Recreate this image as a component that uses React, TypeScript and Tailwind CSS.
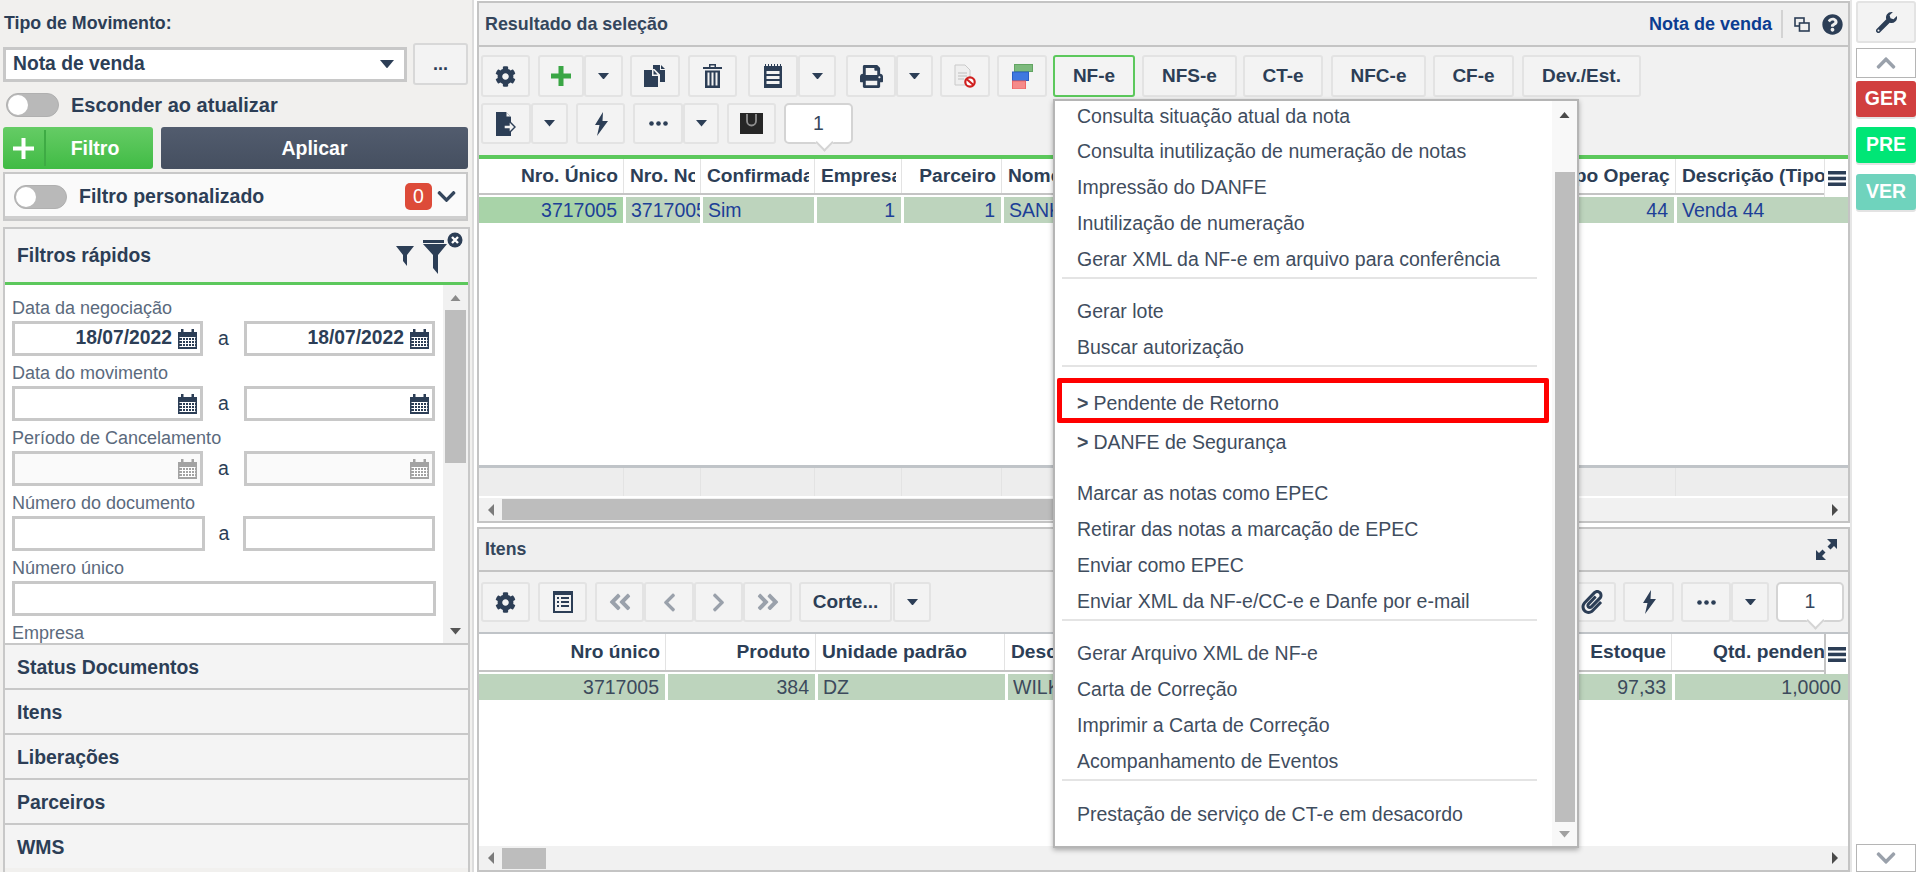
import React from 'react';
import { FaCog, FaPrint, FaPaperclip, FaQuestionCircle, FaChevronDown, FaChevronUp, FaChevronLeft, FaChevronRight, FaAngleDoubleLeft, FaAngleDoubleRight } from 'react-icons/fa';

const NAVY = '#2c3e56';

function Caret({ size = 11, color = NAVY }: { size?: number; color?: string }) {
    return (
        <svg width={size} height={size * 0.6} viewBox="0 0 10 6"><path d="M0 0h10L5 6z" fill={color} /></svg>
    );
}

function Calendar({ muted }: { muted?: boolean }) {
    const c = muted ? '#a3a3a3' : NAVY;
    return (
        <svg width="19" height="20" viewBox="0 0 19 20" className="shrink-0">
            <rect x="0" y="3" width="19" height="17" fill={c} />
            <rect x="3" y="0" width="2.5" height="4" fill={c} />
            <rect x="13.5" y="0" width="2.5" height="4" fill={c} />
            {[8, 11, 14, 17].map((y) => (
                <rect key={y} x="1.5" y={y} width="16" height="1" fill="#fff" />
            ))}
            {[4, 7, 10, 13, 16].map((x) => (
                <rect key={x} x={x} y="8" width="1" height="10" fill="#fff" />
            ))}
        </svg>
    );
}

function PlusIcon() {
    return (
        <svg width="20" height="20" viewBox="0 0 20 20"><path d="M7.5 0h5v7.5H20v5h-7.5V20h-5v-7.5H0v-5h7.5z" fill="#3aa645" /></svg>
    );
}

function CopyIcon() {
    return (
        <svg width="22" height="22" viewBox="0 0 22 22" fill={NAVY}>
            <path d="M9 0h7v5h5v12h-5V9.500L10.500 4H9z" />
            <path d="M17 0l4 4h-4z" />
            <path d="M0 5h8v6h6v11H0z" />
            <path d="M9.500 5l4 4.500h-4z" />
        </svg>
    );
}

function TrashIcon() {
    return (
        <svg width="19" height="24" viewBox="0 0 19 24" fill={NAVY}>
            <path d="M6 0h7v3h6v2H0V3h6zM7.500 1.500V3h4V1.500z" />
            <path d="M2 6.500h15V24H2zM4.500 8.500v13h2v-13zm4 0v13h2v-13zm4 0v13h2v-13z" fillRule="evenodd" />
        </svg>
    );
}

function NotepadIcon() {
    return (
        <svg width="18" height="24" viewBox="0 0 18 24" fill={NAVY}>
            <path d="M0 2h18v22H0zM2.500 7v3h13V7zm0 5v3h13v-3zm0 5v3h13v-3z" fillRule="evenodd" />
            <path d="M1 0h1v2H1zM4 0h1v2H4zM7 0h1v2H7zM10 0h1v2h-1zM13 0h1v2h-1zM16 0h1v2h-1z" />
        </svg>
    );
}

function DocBlockIcon() {
    return (
        <svg width="22" height="24" viewBox="0 0 22 24">
            <path d="M1 1h10l5 5v15H1z" fill="#efefef" stroke="#c9c9c9" />
            <path d="M4 9h9M4 12h9M4 15h6" stroke="#bdbdbd" />
            <circle cx="16" cy="18" r="4.700" fill="#fff" stroke="#d0201f" strokeWidth="2.200" />
            <path d="M12.500 15l7 6" stroke="#d0201f" strokeWidth="2.200" />
        </svg>
    );
}

function StackIcon() {
    return (
        <svg width="22" height="25" viewBox="0 0 22 25">
            <rect x="3.500" y="0.500" width="18" height="7" fill="#7dba7d" stroke="#62a562" />
            <rect x="1.500" y="8" width="16" height="8.500" fill="#3f78e0" stroke="#2a5fc4" />
            <rect x="1.500" y="17" width="13" height="8" fill="#f58a8a" stroke="#e66" />
        </svg>
    );
}

function ExportIcon() {
    return (
        <svg width="20" height="24" viewBox="0 0 20 24">
            <path d="M0 0h10l5 5v19H0z" fill={NAVY} />
            <path d="M10.500 0.500l4 4h-4z" fill="#f3f3f3" />
            <path d="M8 13h5V9l6 6-6 6v-4H8z" fill="#f3f3f3" stroke={NAVY} strokeWidth="1.400" />
        </svg>
    );
}

function BoltIcon() {
    return (
        <svg width="14" height="24" viewBox="0 0 14 24"><path d="M9 0L1 13h4.500L3 24 14 9H8.500z" fill={NAVY} /></svg>
    );
}

function Dots() {
    return (
        <svg width="19" height="5" viewBox="0 0 19 5" fill={NAVY}>
            <circle cx="2.500" cy="2.500" r="2.300" /><circle cx="9.500" cy="2.500" r="2.300" /><circle cx="16.500" cy="2.500" r="2.300" />
        </svg>
    );
}

function BagIcon() {
    return (
        <svg width="23" height="21" viewBox="0 0 23 21">
            <rect width="23" height="21" fill="#262626" />
            <path d="M7 1v7a4.500 4.500 0 0 0 9 0V1" fill="none" stroke="#8f8f8f" strokeWidth="1.800" />
        </svg>
    );
}

function GridListIcon() {
    return (
        <svg width="20" height="22" viewBox="0 0 20 22" fill={NAVY}>
            <path d="M0 0h20v22H0zM2 4v16h16V4z" fillRule="evenodd" />
            <path d="M4 6h2v2H4zM8 6h8v2H8zM4 10h2v2H4zM8 10h8v2H8zM4 14h2v2H4zM8 14h8v2H8z" />
        </svg>
    );
}

function FunnelPlain() {
    return (
        <svg width="18" height="20" viewBox="0 0 18 20"><path d="M0 0h18l-7 9v11l-4-5V9z" fill={NAVY} /></svg>
    );
}

function FunnelClear() {
    return (
        <svg width="40" height="42" viewBox="0 0 40 42">
            <rect x="0" y="8" width="21" height="3" fill={NAVY} />
            <path d="M0 12h24l-9 11v19l-5-6V23z" fill={NAVY} />
            <circle cx="32" cy="8" r="7.500" fill={NAVY} />
            <path d="M29 5l6 6M35 5l-6 6" stroke="#fff" strokeWidth="2.400" />
        </svg>
    );
}

function ExpandIcon() {
    return (
        <svg width="21" height="21" viewBox="0 0 21 21" fill={NAVY}>
            <path d="M11 0h10v10l-3-3-3.500 3.500-3-3L15 4z" />
            <path d="M0 21V11l3 3 3.500-3.500 3 3L6 17l4 4z" />
        </svg>
    );
}

function CloneIcon() {
    return (
        <svg width="16" height="15" viewBox="0 0 16 15" fill="none" stroke={NAVY} strokeWidth="1.600">
            <rect x="1" y="1" width="9" height="8" />
            <rect x="5.500" y="6" width="9.500" height="8" fill="#efefef" />
        </svg>
    );
}

function WrenchIcon() {
    return (
        <svg width="21" height="21" viewBox="0 0 21 21">
            <path d="M15.500 0a5.500 5.500 0 0 0-5.200 7.300L0.700 16.900a2.400 2.400 0 0 0 3.400 3.400l9.600-9.600A5.500 5.500 0 0 0 20.800 4l-3.300 3.200-3-1 -0.900-3L16.900 0.100A5.500 5.500 0 0 0 15.500 0z" fill={NAVY} />
            <circle cx="2.500" cy="18.500" r="1" fill="#f3f3f3" />
        </svg>
    );
}

function Hamburger() {
    return (
        <svg width="18" height="15" viewBox="0 0 18 15" fill={NAVY}>
            <rect width="18" height="3.500" /><rect y="5.700" width="18" height="3.500" /><rect y="11.500" width="18" height="3.500" />
        </svg>
    );
}

function Toggle() {
    return (
        <div className="w-[53px] h-[24px] rounded-full bg-[#b9b9b9] border border-[#b0b0b0] flex items-center pl-[1px]">
            <div className="w-[20px] h-[20px] rounded-full bg-white" />
        </div>
    );
}

function Btn({ w, className = '', children }: { w: string; className?: string; children?: React.ReactNode }) {
    return (
        <div className={`${w} h-full shrink-0 flex items-center justify-center rounded-[3px] border-2 border-[#e3e3e3] bg-[#f3f3f3] text-[19px] font-bold text-[#2c3e56] ${className}`}>
            {children}
        </div>
    );
}

function CountBubble({ className = '' }: { className?: string }) {
    return (
        <div className={`relative h-full shrink-0 flex items-center justify-center rounded-[5px] border-2 border-[#d4d4d4] bg-white text-[19.500px] text-[#34465c] ${className}`}>
            1
            <div className="absolute -bottom-[7px] right-[20px] w-[13px] h-[13px] rotate-45 bg-white border-r-2 border-b-2 border-[#d4d4d4]" />
        </div>
    );
}

function HScroll({ thumb, className = '' }: { thumb: string; className?: string }) {
    return (
        <div className={`flex items-center bg-[#f1f1f1] ${className}`}>
            <div className="w-[23px] flex justify-center shrink-0">
                <svg width="6" height="12" viewBox="0 0 6 12"><path d="M6 0v12L0 6z" fill="#7b7b7b" /></svg>
            </div>
            <div className={`${thumb} h-[21px] bg-[#bdbdbd]`} />
            <div className="flex-1 flex justify-end pr-[10px]">
                <svg width="6" height="12" viewBox="0 0 6 12"><path d="M0 0v12l6-6z" fill="#4a4a4a" /></svg>
            </div>
        </div>
    );
}

function HeadCell({ w, right, children }: { w: string; right?: boolean; children?: React.ReactNode }) {
    return (
        <div className={`${w} h-full shrink-0 flex items-center pl-[6px] pr-[5px] border-r border-[#e3e3e3]`}>
            <div className={`w-full overflow-hidden whitespace-nowrap font-bold text-[19.200px] text-[#2c3e56] ${right ? 'text-right' : ''}`}>{children}</div>
        </div>
    );
}

function RowCell({ w, right, bg = 'bg-[#bdd4bd]', text = 'text-[#1d3f97]', pr = 'pr-[6px]', children }: { w: string; right?: boolean; bg?: string; text?: string; pr?: string; children?: React.ReactNode }) {
    return (
        <div className={`${w} h-full shrink-0 flex items-center pl-[5px] ${pr} pt-[2px] ${bg}`}>
            <div className={`w-full overflow-hidden whitespace-nowrap text-[19.500px] ${text} ${right ? 'text-right' : ''}`}>{children}</div>
        </div>
    );
}

function Field({ label, children }: { label: string; children: React.ReactNode }) {
    return (
        <div>
            <div className="h-[30px] flex items-center pt-[4px] text-[18px] text-[#5b6a7d] whitespace-nowrap">{label}</div>
            <div className="h-[35px] flex items-center">{children}</div>
        </div>
    );
}

function DateInput({ value, muted }: { value?: string; muted?: boolean }) {
    return (
        <div className={`w-[191px] h-full flex items-center justify-end gap-[6px] pr-[3px] border-[3px] border-[#c8c8c8] ${muted ? 'bg-[#fafafa]' : 'bg-white'}`}>
            {value && <span className="font-bold text-[19.300px] text-[#2c3e56]">{value}</span>}
            <Calendar muted={muted} />
        </div>
    );
}

function MenuItem({ children, className = '' }: { children: React.ReactNode; className?: string }) {
    return <div className={`h-[36px] flex items-center pl-[22px] pt-[2px] whitespace-nowrap ${className}`}>{children}</div>;
}

function MenuSep({ className = '' }: { className?: string }) {
    return <div className={`ml-[7px] w-[475px] border-t-2 border-[#e4e4e4] ${className}`} />;
}

export default function App() {
    return (
        <div className="relative flex w-[1918px] h-[872px] overflow-hidden bg-white font-['Liberation_Sans',Arial,sans-serif] text-[#2c3e56]">

            {/* Left filter panel */}
            <aside className="w-[474px] h-full shrink-0 flex flex-col bg-[#f1f0ee] border-r-2 border-[#dcdcdc]">
                <div className="h-[43px] shrink-0 flex items-center pl-[4px] pt-[3px] font-bold text-[17.800px]">Tipo de Movimento:</div>

                <div className="h-[42px] shrink-0 flex items-center pl-[3px]">
                    <div className="w-[404px] h-[35px] flex items-center justify-between pl-[7px] pr-[10px] bg-white border-[3px] border-[#c8c8c8] font-bold text-[19.300px]">
                        Nota de venda
                        <Caret size={14} />
                    </div>
                    <div className="ml-[6px] w-[55px] h-[42px] flex items-end justify-center pb-[10px] rounded-[3px] border-2 border-[#d8d8d8] bg-[#f3f3f3] font-bold text-[18px] leading-none">...</div>
                </div>

                <div className="mt-[8px] h-[24px] shrink-0 flex items-center pl-[6px] gap-[12px]">
                    <Toggle />
                    <span className="font-bold text-[20px]">Esconder ao atualizar</span>
                </div>

                <div className="mt-[10px] h-[42px] shrink-0 flex pl-[3px] gap-[8px]">
                    <div className="w-[150px] flex items-center rounded-[3px] bg-gradient-to-b from-[#65cc65] to-[#3fbb44] text-white font-bold text-[19.500px]">
                        <div className="w-[43px] h-[36px] flex items-center justify-center border-r-2 border-[#3eab44]">
                            <svg width="21" height="21" viewBox="0 0 21 21"><path d="M8.500 0h4v8.500H21v4h-8.500V21h-4v-8.500H0v-4h8.500z" fill="#fff" /></svg>
                        </div>
                        <span className="flex-1 text-center pr-[9px] pt-[1px]">Filtro</span>
                    </div>
                    <div className="w-[307px] flex items-center justify-center pt-[1px] rounded-[3px] bg-gradient-to-b from-[#525c6e] to-[#454f60] text-white font-bold text-[19.500px]">Aplicar</div>
                </div>

                <div className="mt-[3px] ml-[3px] w-[465px] h-[49px] shrink-0 flex items-center pl-[9px] pr-[9px] bg-[#fafafa] border-2 border-[#c8c8c8] shadow-[inset_0_-3px_0_#cfcfcf]">
                    <Toggle />
                    <span className="ml-[12px] font-bold text-[19.500px]">Filtro personalizado</span>
                    <span className="ml-auto w-[27px] h-[27px] flex items-center justify-center rounded-[5px] bg-[#dd4b39] text-white text-[19.500px]">0</span>
                    <FaChevronDown className="ml-[4px] text-[#34465c]" size={21} />
                </div>

                <div className="mt-[6px] ml-[3px] w-[467px] flex-1 min-h-0 flex flex-col border-x-2 border-t-2 border-[#c8c8c8]">
                    <div className="h-[53px] shrink-0 flex items-center justify-between pl-[12px] pt-[2px] bg-[#f4f4f4] pr-[5px]">
                        <span className="font-bold text-[19.300px]">Filtros rápidos</span>
                        <div className="flex items-center -mt-[2px]">
                            <FunnelPlain />
                            <div className="ml-[9px] -mt-[6px]"><FunnelClear /></div>
                        </div>
                    </div>
                    <div className="h-[3px] shrink-0 bg-[#5cc85c]" />

                    <div className="h-[358px] shrink-0 flex bg-white overflow-hidden">
                        <div className="flex-1 pl-[7px] pt-[6px] overflow-hidden">
                            <Field label="Data da negociação">
                                <DateInput value="18/07/2022" />
                                <span className="w-[41px] text-center text-[19.500px]">a</span>
                                <DateInput value="18/07/2022" />
                            </Field>
                            <Field label="Data do movimento">
                                <DateInput />
                                <span className="w-[41px] text-center text-[19.500px]">a</span>
                                <DateInput />
                            </Field>
                            <Field label="Período de Cancelamento">
                                <DateInput muted />
                                <span className="w-[41px] text-center text-[19.500px]">a</span>
                                <DateInput muted />
                            </Field>
                            <Field label="Número do documento">
                                <div className="w-[193px] h-full bg-white border-[3px] border-[#c8c8c8]" />
                                <span className="w-[38px] text-center text-[19.500px]">a</span>
                                <div className="w-[192px] h-full bg-white border-[3px] border-[#c8c8c8]" />
                            </Field>
                            <Field label="Número único">
                                <div className="w-[424px] h-full bg-white border-[3px] border-[#c8c8c8]" />
                            </Field>
                            <div className="h-[30px] flex items-center pt-[4px] text-[18px] text-[#5b6a7d]">Empresa</div>
                        </div>
                        <div className="w-[25px] shrink-0 bg-[#f1f1f1] flex flex-col items-center">
                            <div className="h-[25px] flex items-center justify-center"><svg width="11" height="6" viewBox="0 0 10 6"><path d="M0 6h10L5 0z" fill="#8a8a8a" /></svg></div>
                            <div className="w-[21px] h-[153px] bg-[#bdbdbd]" />
                            <div className="flex-1 flex items-end pb-[8px]"><Caret color="#555" /></div>
                        </div>
                    </div>

                    {['Status Documentos', 'Itens', 'Liberações', 'Parceiros', 'WMS'].map((t) => (
                        <div key={t} className="h-[45px] shrink-0 flex items-center pl-[12px] pt-[2px] bg-[#f4f4f4] border-t-2 border-[#c8c8c8] font-bold text-[19.400px]">{t}</div>
                    ))}
                </div>
            </aside>

            {/* Main area */}
            <main className="relative ml-[3px] w-[1375px] shrink-0 h-full flex flex-col border-r-2 border-[#e6e6e6]">

                <section className="mt-[1px] h-[522px] shrink-0 flex flex-col border-2 border-[#c4c4c4] overflow-hidden">
                    <div className="h-[44px] shrink-0 flex items-center justify-between pl-[6px] pr-[5px] bg-[#efefef] border-b-2 border-[#c4c4c4]">
                        <span className="font-bold text-[17.900px] text-[#34465c]">Resultado da seleção</span>
                        <div className="flex items-center">
                            <span className="font-bold text-[18px] text-[#0b3d91]">Nota de venda</span>
                            <div className="ml-[9px] w-[2px] h-[28px] bg-[#d3d3d3]" />
                            <div className="ml-[11px]"><CloneIcon /></div>
                            <FaQuestionCircle className="ml-[12px]" size={21} color={NAVY} />
                        </div>
                    </div>

                    <div className="h-[108px] shrink-0 bg-[#f1f1f1] px-[2px] pt-[8px]">
                        <div className="h-[42px] flex">
                            <Btn w="w-[49px]"><FaCog size={21} color={NAVY} /></Btn>
                            <Btn w="w-[46px]" className="ml-[8px]"><PlusIcon /></Btn>
                            <Btn w="w-[39px]"><Caret /></Btn>
                            <Btn w="w-[50px]" className="ml-[7px]"><CopyIcon /></Btn>
                            <Btn w="w-[49px]" className="ml-[8px]"><TrashIcon /></Btn>
                            <Btn w="w-[50px]" className="ml-[11px]"><NotepadIcon /></Btn>
                            <Btn w="w-[38px]"><Caret /></Btn>
                            <Btn w="w-[50px]" className="ml-[10px]"><FaPrint size={23} color={NAVY} /></Btn>
                            <Btn w="w-[37px]"><Caret /></Btn>
                            <Btn w="w-[50px]" className="ml-[7px]"><DocBlockIcon /></Btn>
                            <Btn w="w-[50px]" className="ml-[7px]"><StackIcon /></Btn>
                            <Btn w="w-[82px]" className="ml-[6px] !border-[#5cc85c]">NF-e</Btn>
                            <Btn w="w-[95px]" className="ml-[7px]">NFS-e</Btn>
                            <Btn w="w-[80px]" className="ml-[6px]">CT-e</Btn>
                            <Btn w="w-[95px]" className="ml-[8px]">NFC-e</Btn>
                            <Btn w="w-[81px]" className="ml-[7px]">CF-e</Btn>
                            <Btn w="w-[119px]" className="ml-[8px]">Dev./Est.</Btn>
                        </div>
                        <div className="mt-[6px] h-[41px] flex">
                            <Btn w="w-[50px]"><ExportIcon /></Btn>
                            <Btn w="w-[37px]"><Caret /></Btn>
                            <Btn w="w-[49px]" className="ml-[8px]"><BoltIcon /></Btn>
                            <Btn w="w-[50px]" className="ml-[8px]"><Dots /></Btn>
                            <Btn w="w-[36px]"><Caret /></Btn>
                            <Btn w="w-[49px]" className="ml-[8px]"><BagIcon /></Btn>
                            <CountBubble className="ml-[8px] w-[69px]" />
                        </div>
                    </div>

                    <div className="h-[4px] shrink-0 bg-[#5cc85c]" />
                    <div className="h-[36px] shrink-0 relative flex bg-white border-b-2 border-[#c4c4c4]">
                        <HeadCell w="w-[145px]" right>Nro. Único</HeadCell>
                        <HeadCell w="w-[77px]">Nro. Nota</HeadCell>
                        <HeadCell w="w-[114px]">Confirmada</HeadCell>
                        <HeadCell w="w-[87px]">Empresa</HeadCell>
                        <HeadCell w="w-[100px]" right>Parceiro</HeadCell>
                        <HeadCell w="w-[550px]">Nome Parceiro</HeadCell>
                        <HeadCell w="w-[124px]">Tipo Operação</HeadCell>
                        <HeadCell w="w-[172px]">Descrição (Tipo de Operação)</HeadCell>
                        <div className="absolute right-0 top-0 w-[24px] h-[38px] bg-white flex items-center justify-center border-l border-[#e3e3e3]"><Hamburger /></div>
                    </div>

                    <div className="flex-1 min-h-0 bg-white pt-[2px]">
                        <div className="h-[26px] flex gap-[3px] pr-[1px]">
                            <RowCell w="w-[144px]" right bg="bg-[#a8d3a8]">3717005</RowCell>
                            <RowCell w="w-[74px]" pr="pr-[0px]">3717005</RowCell>
                            <RowCell w="w-[111px]">Sim</RowCell>
                            <RowCell w="w-[84px]" right>1</RowCell>
                            <RowCell w="w-[97px]" right>1</RowCell>
                            <RowCell w="w-[548px]">SANKHYA</RowCell>
                            <RowCell w="w-[119px]" right>44</RowCell>
                            <RowCell w="w-[173px]">Venda 44</RowCell>
                        </div>
                    </div>

                    <div className="h-[31px] shrink-0 flex bg-[#ededed] border-t-[3px] border-[#c0c4c8]">
                        <div className="w-[145px] border-r border-[#e3e3e3]" />
                        <div className="w-[77px] border-r border-[#e3e3e3]" />
                        <div className="w-[114px] border-r border-[#e3e3e3]" />
                        <div className="w-[87px] border-r border-[#e3e3e3]" />
                        <div className="w-[100px] border-r border-[#e3e3e3]" />
                        <div className="w-[674px] border-r border-[#e3e3e3]" />
                    </div>
                    <HScroll thumb="w-[1000px]" className="mt-[2px] h-[23px] shrink-0" />
                </section>

                <section className="mt-[4px] flex-1 min-h-0 flex flex-col border-2 border-[#c4c4c4] overflow-hidden">
                    <div className="h-[43px] shrink-0 flex items-center justify-between pl-[6px] pr-[11px] bg-[#efefef] border-b-2 border-[#c4c4c4]">
                        <span className="font-bold text-[17.700px] text-[#34465c]">Itens</span>
                        <ExpandIcon />
                    </div>

                    <div className="h-[60px] shrink-0 flex justify-between bg-[#f1f1f1] pl-[2px] pr-[4px] pt-[10px]">
                        <div className="h-[40px] flex">
                            <Btn w="w-[49px]"><FaCog size={21} color={NAVY} /></Btn>
                            <Btn w="w-[49px]" className="ml-[8px]"><GridListIcon /></Btn>
                            <Btn w="w-[49px]" className="ml-[8px]"><FaAngleDoubleLeft size={26} color="#9aa1ab" /></Btn>
                            <Btn w="w-[50px]"><FaChevronLeft size={21} color="#9aa1ab" /></Btn>
                            <Btn w="w-[49px]"><FaChevronRight size={21} color="#9aa1ab" /></Btn>
                            <Btn w="w-[49px]"><FaAngleDoubleRight size={26} color="#9aa1ab" /></Btn>
                            <Btn w="w-[93px]" className="ml-[7px]">Corte...</Btn>
                            <Btn w="w-[38px]" className="ml-[1px]"><Caret /></Btn>
                        </div>
                        <div className="h-[40px] flex">
                            <Btn w="w-[49px]"><FaPaperclip size={24} color={NAVY} /></Btn>
                            <Btn w="w-[51px]" className="ml-[7px]"><BoltIcon /></Btn>
                            <Btn w="w-[50px]" className="ml-[7px]"><Dots /></Btn>
                            <Btn w="w-[38px]"><Caret /></Btn>
                            <CountBubble className="ml-[7px] w-[68px]" />
                        </div>
                    </div>

                    <div className="h-[40px] shrink-0 relative flex bg-white border-y-2 border-[#c4c4c4] border-t-[#c0c4c8]">
                        <HeadCell w="w-[187px]" right>Nro único</HeadCell>
                        <HeadCell w="w-[150px]" right>Produto</HeadCell>
                        <HeadCell w="w-[189px]">Unidade padrão</HeadCell>
                        <HeadCell w="w-[500px]">Descrição</HeadCell>
                        <HeadCell w="w-[167px]" right>Estoque</HeadCell>
                        <HeadCell w="w-[176px]" right>Qtd. pendente</HeadCell>
                        <div className="absolute right-0 top-0 w-[24px] h-[40px] bg-white flex items-center justify-center border-l-2 border-[#c4c4c4]"><Hamburger /></div>
                    </div>

                    <div className="flex-1 min-h-0 bg-white pt-[2px]">
                        <div className="h-[26px] flex gap-[3px] pr-[1px]">
                            <RowCell w="w-[186px]" right text="text-[#3c4a5c]">3717005</RowCell>
                            <RowCell w="w-[147px]" right text="text-[#3c4a5c]">384</RowCell>
                            <RowCell w="w-[187px]" text="text-[#3c4a5c]">DZ</RowCell>
                            <RowCell w="w-[500px]" text="text-[#3c4a5c]">WILKINSON</RowCell>
                            <RowCell w="w-[161px]" right text="text-[#3c4a5c]">97,33</RowCell>
                            <RowCell w="w-[175px]" right text="text-[#3c4a5c]" pr="pr-[9px]">1,0000</RowCell>
                        </div>
                    </div>

                    <HScroll thumb="w-[44px]" className="h-[24px] shrink-0" />
                </section>

                {/* NF-e dropdown over both panels */}
                <div className="absolute left-[576px] top-[99px] w-[526px] h-[749px] flex bg-white border-2 border-[#b5b5b5] shadow-[0_2px_5px_rgba(0,0,0,0.3)] text-[19.500px] text-[#3f4d5e]">
                    <div className="flex-1 min-w-0">
                        <MenuItem className="!h-[32px] !pt-0">Consulta situação atual da nota</MenuItem>
                        <MenuItem>Consulta inutilização de numeração de notas</MenuItem>
                        <MenuItem>Impressão do DANFE</MenuItem>
                        <MenuItem>Inutilização de numeração</MenuItem>
                        <MenuItem>Gerar XML da NF-e em arquivo para conferência</MenuItem>
                        <MenuSep className="h-[16px]" />
                        <MenuItem>Gerar lote</MenuItem>
                        <MenuItem>Buscar autorização</MenuItem>
                        <MenuSep className="h-[20px]" />
                        <div className="relative">
                            <MenuItem><b className="mr-[5px]">&gt;</b>Pendente de Retorno</MenuItem>
                            <div className="absolute left-[2px] -top-[7px] w-[492px] h-[45px] border-[5px] border-[#ff0000] rounded-[2px]" />
                        </div>
                        <MenuItem className="mt-[3px]"><b className="mr-[5px]">&gt;</b>DANFE de Segurança</MenuItem>
                        <MenuItem className="mt-[15px]">Marcar as notas como EPEC</MenuItem>
                        <MenuItem>Retirar das notas a marcação de EPEC</MenuItem>
                        <MenuItem>Enviar como EPEC</MenuItem>
                        <MenuItem>Enviar XML da NF-e/CC-e e Danfe por e-mail</MenuItem>
                        <MenuSep className="h-[16px]" />
                        <MenuItem>Gerar Arquivo XML de NF-e</MenuItem>
                        <MenuItem>Carta de Correção</MenuItem>
                        <MenuItem>Imprimir a Carta de Correção</MenuItem>
                        <MenuItem>Acompanhamento de Eventos</MenuItem>
                        <MenuSep className="h-[17px]" />
                        <MenuItem>Prestação de serviço de CT-e em desacordo</MenuItem>
                    </div>
                    <div className="w-[25px] shrink-0 flex flex-col items-center bg-[#f8f8f8]">
                        <div className="h-[71px] pt-[11px]"><svg width="11" height="6" viewBox="0 0 10 6"><path d="M0 6h10L5 0z" fill="#4a4a4a" /></svg></div>
                        <div className="w-[20px] h-[650px] bg-[#bdbdbd]" />
                        <div className="pt-[9px]"><Caret color="#a0a0a0" /></div>
                    </div>
                </div>
            </main>

            {/* Right status column */}
            <div className="ml-[4px] w-[60px] shrink-0 h-full flex flex-col">
                <div className="mt-[1px] h-[42px] shrink-0 flex items-center justify-center rounded-[3px] border-2 border-[#e3e3e3] bg-[#f3f3f3]"><WrenchIcon /></div>
                <div className="mt-[5px] h-[30px] shrink-0 flex items-center justify-center border border-[#b5b5b5] bg-white"><FaChevronUp size={22} color="#9aa1ab" /></div>
                <div className="mt-[3px] h-[36px] shrink-0 flex items-center justify-center rounded-[3px] bg-[#d13f3f] text-white font-bold text-[19.500px] shadow-[0_2px_0_#e3e3e3]">GER</div>
                <div className="mt-[10px] h-[36px] shrink-0 flex items-center justify-center rounded-[3px] bg-[#00e676] text-white font-bold text-[19.500px] shadow-[0_2px_0_#e3e3e3]">PRE</div>
                <div className="mt-[11px] h-[36px] shrink-0 flex items-center justify-center rounded-[3px] bg-[#6fd3bd] text-white font-bold text-[19.500px] shadow-[0_2px_0_#e3e3e3]">VER</div>
                <div className="mt-auto h-[28px] shrink-0 flex items-center justify-center border border-[#b5b5b5] bg-white"><FaChevronDown size={22} color="#9aa1ab" /></div>
            </div>
        </div>
    );
}
